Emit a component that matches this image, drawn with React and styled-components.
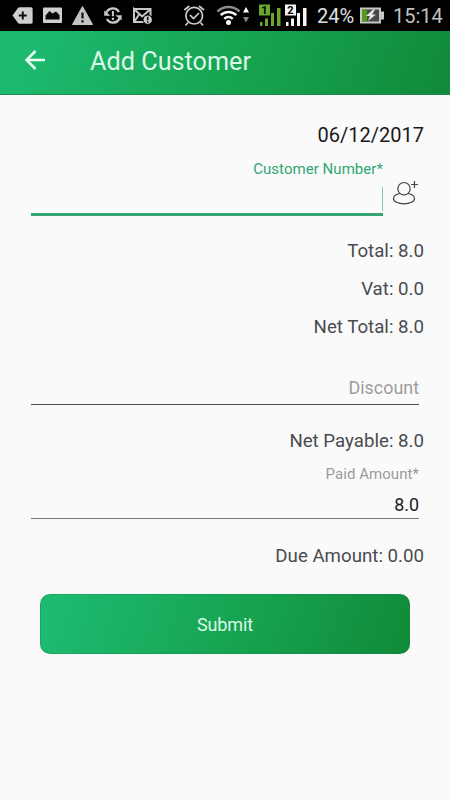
import styled, { createGlobalStyle } from "styled-components";

const GlobalStyle = createGlobalStyle`
  * {
    box-sizing: border-box;
    margin: 0;
    padding: 0;
  }

  body {
    background-color: #fafafa;
    font-family: Roboto, "Liberation Sans", sans-serif;
  }
`;

const Screen = styled.div`
  width: 450px;
  height: 800px;
  overflow: hidden;
  background-color: #fafafa;
`;

const StatusBar = styled.div`
  height: 31px;
  display: flex;
  align-items: center;
  background-color: #000;
  color: #d2d2d2;
`;

const StatusIcon = styled.svg`
  flex: none;
  height: 31px;
  margin-left: ${({ $gap }) => $gap}px;
`;

const StatusText = styled.span`
  flex: none;
  width: ${({ $width }) => $width}px;
  margin-left: ${({ $gap }) => $gap}px;
  padding-top: 1px;
  font-size: 20px;
  line-height: 31px;
  white-space: nowrap;
  color: ${({ $color }) => $color};
`;

const Toolbar = styled.header`
  height: 64px;
  padding-left: 22px;
  display: flex;
  align-items: center;
  background: linear-gradient(110deg, #1dba70 5%, #16a350 55%, #118b3a 98%);
  border-bottom: 1px solid #1f8a50;

  svg {
    flex: none;
    margin-top: -5px;
  }
`;

const Title = styled.h1`
  margin: -1px 0 0 42px;
  font-size: 25.2px;
  line-height: 60px;
  font-weight: 400;
  letter-spacing: 0.03px;
  color: #dcf8e8;
`;

const Form = styled.main`
  padding: 21px 26px 0 31px;
  text-align: right;
`;

const DateText = styled.p`
  font-size: 20px;
  line-height: 38px;
  color: #191919;
`;

const CustomerRow = styled.div`
  margin-top: 6px;
  display: flex;

  svg {
    flex: none;
    margin: 19px 0 0 9px;
  }
`;

const CustomerField = styled.div`
  width: 352px;
`;

const Label = styled.p`
  font-size: 15px;
  line-height: 18px;
  letter-spacing: 0.05px;
  color: ${({ $active }) => ($active ? "#2fa772" : "#9c9c9c")};
`;

const ActiveInput = styled.div`
  height: 38px;
  padding-top: 9px;
  display: flex;
  justify-content: flex-end;
  border-bottom: 3px solid #35a574;
`;

const Cursor = styled.span`
  width: 1px;
  height: 24px;
  background-color: #86c9aa;
`;

const Summary = styled.section`
  margin-top: ${({ $top }) => $top}px;
`;

const Amount = styled.p`
  font-size: 18.7px;
  line-height: 38px;
  color: #4a4b50;
`;

const Field = styled.div`
  width: 388px;
  height: ${({ $height }) => $height}px;
  margin-top: ${({ $top }) => $top}px;
  border-bottom: 1px solid ${({ $line }) => $line};
`;

const Value = styled.p`
  font-size: 17.9px;
  line-height: ${({ $line }) => $line}px;
  color: ${({ $hint }) => ($hint ? "#9c9c9c" : "#202020")};
`;

const SubmitButton = styled.button`
  display: block;
  width: 370px;
  height: 60px;
  margin: 19px 0 0 9px;
  border: 1px solid rgba(20, 130, 70, 0.3);
  border-radius: 10px;
  background: linear-gradient(110deg, #1dba70 5%, #16a350 55%, #118b3a 98%);
  background-origin: border-box;
  font-family: inherit;
  font-size: 18px;
  letter-spacing: -0.1px;
  color: #dcf8e8;
`;

const Signal = ({ gap, number, color }) => (
  <StatusIcon $gap={gap} width="22" viewBox="0 0 22 31" fill={color}>
    <rect x="0" y="4.5" width="11" height="11" />
    <text x="5.5" y="14" fontSize="11" fontWeight="700" textAnchor="middle" fill="#000">
      {number}
    </text>
    <rect x="1" y="22" width="2.5" height="4" />
    <rect x="6" y="18.5" width="3" height="7.5" />
    <rect x="12" y="13" width="3" height="13" />
    <rect x="18" y="8" width="3.5" height="18" />
  </StatusIcon>
);

const App = () => {
  return (
    <>
      <GlobalStyle />
      <Screen>
        <StatusBar>
          <StatusIcon $gap={12} width="21" viewBox="12 0 21 31">
            <path d="M12.5 15.5 18 8q.6-.8 1.5-.8H31q1.6 0 1.6 1.6v13.4q0 1.6-1.6 1.6H19.5q-.9 0-1.5-.8z" fill="#cfcfcf" />
            <path d="M22.8 11.5v8M18.8 15.5h8" stroke="#111" strokeWidth="2" />
          </StatusIcon>
          <StatusIcon $gap={10} width="19" viewBox="43 0 19 31">
            <rect x="43" y="7.5" width="19" height="15.5" rx="1" fill="#cfcfcf" />
            <path d="M45.5 19.5v-4l4-4.5 3 2.5 3.5-2 3.5 3.5v4.5z" fill="#090909" />
          </StatusIcon>
          <StatusIcon $gap={10} width="21" viewBox="72 0 21 31">
            <path d="M82.5 6.5 92.5 24.5H72.5z" fill="#c4c4c4" stroke="#c4c4c4" strokeLinejoin="round" />
            <path d="M82.5 12.5v6M82.5 20.2v2.2" stroke="#111" strokeWidth="2.2" />
          </StatusIcon>
          <StatusIcon $gap={11} width="18" viewBox="104 0 18 31" fill="none" stroke="#c8c8c8" strokeWidth="2.4">
            <path d="M106.3 12.8a7 7 0 0 1 12.6-.8M119.5 18.2a7 7 0 0 1-12.6.8" />
            <path d="M104.2 10.5v5.2h6.3zM121.6 20.5v-5.2h-6.3z" fill="#c8c8c8" stroke="none" />
            <path d="M112.9 11v5.2M112.9 17.7v2.2" strokeWidth="2" />
          </StatusIcon>
          <StatusIcon $gap={11} width="19" viewBox="133 0 19 31" fill="none" stroke="#c8c8c8">
            <path d="M134 9h16.5v7M145 22H134V9l8.2 7.500L150.5 9M134 22l5.500-8" strokeWidth="2" />
            <circle cx="147.7" cy="19.7" r="4.7" fill="#c8c8c8" stroke="#000" />
            <path d="M147.7 16.700v3.500M147.7 21.200v1.500" stroke="#111" strokeWidth="1.6" />
          </StatusIcon>
          <StatusIcon $gap={31} width="22" viewBox="183 0 22 31" fill="none" stroke="#cecece" strokeWidth="1.7">
            <circle cx="194.2" cy="15.7" r="8.3" />
            <path d="m184.3 10 5-4M204 10l-5-4M188 22.5l-2.5 3M200.5 22.5l2.5 3M190 15l3.5 3.5 5.5-5.5" />
          </StatusIcon>
          <StatusIcon $gap={11} width="33" viewBox="216 0 33 31" fill="none" strokeWidth="2.5">
            <path d="M217.5 11.5a15.5 15.5 0 0 1 22 0" stroke="#8c8c8c" />
            <path d="M220.7 15.2a11 11 0 0 1 15.6 0M224.3 18.8a6 6 0 0 1 8.4 0" stroke="#f4f4f4" />
            <circle cx="228.5" cy="22.5" r="2.5" fill="#fff" />
            <path d="m246 7 3 5.5h-6z" fill="#fff" />
            <path d="m246 22.5 3-5.5h-6z" fill="#858585" />
          </StatusIcon>
          <Signal gap={10} number="1" color="#68a82c" />
          <Signal gap={4} number="2" color="#f4f4f4" />
          <StatusText $gap={10} $width={40} $color="#e0e0e0">
            24%
          </StatusText>
          <StatusIcon $gap={3} width="24" viewBox="360 0 24 31">
            <path d="M360 7.5h21v4h3v8h-3v4h-21z" fill="#c6c6c6" />
            <rect x="362" y="9.5" width="17" height="12" fill="#484848" />
            <rect x="362" y="9.5" width="5" height="12" fill="#529a18" />
            <path d="m373 9.5-7 6.5h4l-2 5 8-6.5h-4l3-5z" fill="#e8e8e8" />
          </StatusIcon>
          <StatusText $gap={9} $width={50} $color="#c0c0c0">
            15:14
          </StatusText>
        </StatusBar>

        <Toolbar>
          <svg width="26" height="26" viewBox="0 0 26 26" fill="none" stroke="#ecfff6" strokeWidth="2.5">
            <path d="M23 13H5M13.5 4 4.5 13l9 9" />
          </svg>
          <Title>Add Customer</Title>
        </Toolbar>

        <Form>
          <DateText>06/12/2017</DateText>
          <CustomerRow>
            <CustomerField>
              <Label $active>Customer Number*</Label>
              <ActiveInput>
                <Cursor />
              </ActiveInput>
            </CustomerField>
            <svg width="28" height="28" viewBox="0 0 28 28" fill="none" stroke="#444" strokeWidth="1.2">
              <circle cx="12" cy="9.7" r="6.2" />
              <path d="M8 14.5C4 15.3 1.5 17.3 1.5 19.5c0 3 4.7 5.3 10.5 5.3s10.5-2.3 10.5-5.3c0-2.2-2.5-4.2-6.5-5M22.5 2v7M19 5.5h7" />
            </svg>
          </CustomerRow>

          <Summary $top={16}>
            <Amount>Total: 8.0</Amount>
            <Amount>Vat: 0.0</Amount>
            <Amount>Net Total: 8.0</Amount>
          </Summary>

          <Field $top={24} $height={35} $line="#4b4b4b">
            <Value $hint $line={35}>
              Discount
            </Value>
          </Field>

          <Summary $top={17}>
            <Amount>Net Payable: 8.0</Amount>
          </Summary>

          <Field $top={5} $height={54} $line="#777">
            <Label>Paid Amount*</Label>
            <Value $line={43}>8.0</Value>
          </Field>

          <Summary $top={18}>
            <Amount>Due Amount: 0.00</Amount>
          </Summary>

          <SubmitButton>Submit</SubmitButton>
        </Form>
      </Screen>
    </>
  );
};

export default App;
